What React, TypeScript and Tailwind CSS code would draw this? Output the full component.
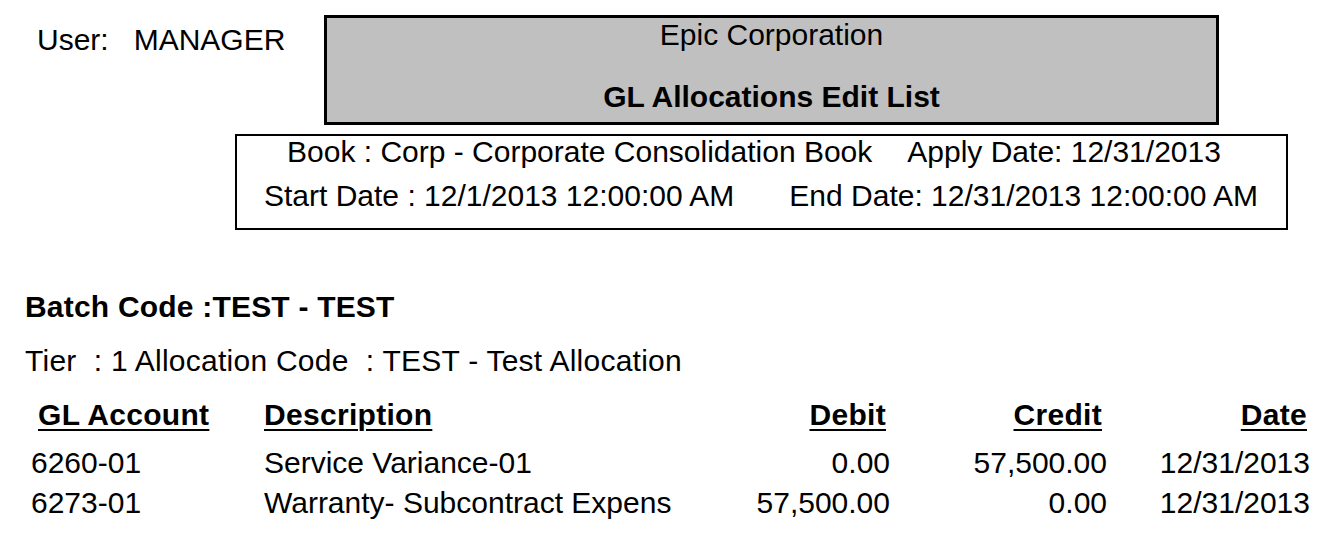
const rows = [
  {
    account: "6260-01",
    description: "Service Variance-01",
    debit: "0.00",
    credit: "57,500.00",
    date: "12/31/2013",
  },
  {
    account: "6273-01",
    description: "Warranty- Subcontract Expens",
    debit: "57,500.00",
    credit: "0.00",
    date: "12/31/2013",
  },
];

export default function App() {
  return (
    <div className="w-[1333px] h-[536px] overflow-hidden bg-white text-black font-['Liberation_Sans',Arial,sans-serif] text-[30px] leading-[30px] pt-[15px]">
      {/* report header */}
      <div className="flex">
        <div className="w-[324px] pl-[37px] pt-[10px] whitespace-pre">User:   MANAGER</div>
        <div className="w-[895px] h-[110px] border-[3px] border-black bg-[#c0c0c0] flex flex-col items-center">
          <div className="pt-[2px]">Epic Corporation</div>
          <div className="mt-[32px] font-bold">GL Allocations Edit List</div>
        </div>
      </div>

      <div className="ml-[235px] mt-[9px] w-[1053px] h-[96px] border-2 border-black">
        <div className="pt-[1px] pl-[50px] whitespace-pre">
          <span>Book : Corp - Corporate Consolidation Book</span>
          <span className="ml-[35px]">Apply Date: 12/31/2013</span>
        </div>
        <div className="mt-[14px] pl-[27px] whitespace-pre">
          <span>Start Date : 12/1/2013 12:00:00 AM</span>
          <span className="ml-[55px]">End Date: 12/31/2013 12:00:00 AM</span>
        </div>
      </div>

      {/* batch */}
      <div className="mt-[62px] pl-[25px] font-bold tracking-[0.2px]">Batch Code :TEST - TEST</div>
      <div className="mt-[24px] pl-[25px] whitespace-pre tracking-[0.25px]">
        Tier  : 1 Allocation Code  : TEST - Test Allocation
      </div>

      <div className="mt-[24px] flex font-bold tracking-[0.3px]">
        <div className="w-[264px] pl-[38px]">
          <span className="underline decoration-2 underline-offset-[4px]">GL Account</span>
        </div>
        <div className="w-[436px]">
          <span className="underline decoration-2 underline-offset-[4px]">Description</span>
        </div>
        <div className="w-[190px] pr-[4px] text-right">
          <span className="underline decoration-2 underline-offset-[4px]">Debit</span>
        </div>
        <div className="w-[217px] pr-[5px] text-right">
          <span className="underline decoration-2 underline-offset-[4px]">Credit</span>
        </div>
        <div className="w-[203px] pr-[3px] text-right">
          <span className="underline decoration-2 underline-offset-[4px]">Date</span>
        </div>
      </div>

      <div className="mt-[18px] flex flex-col gap-[10px]">
        {rows.map((row) => (
          <div key={row.account} className="flex">
            <div className="w-[264px] pl-[31px]">{row.account}</div>
            <div className="w-[436px]">{row.description}</div>
            <div className="w-[190px] text-right">{row.debit}</div>
            <div className="w-[217px] text-right">{row.credit}</div>
            <div className="w-[203px] text-right">{row.date}</div>
          </div>
        ))}
      </div>
    </div>
  );
}
